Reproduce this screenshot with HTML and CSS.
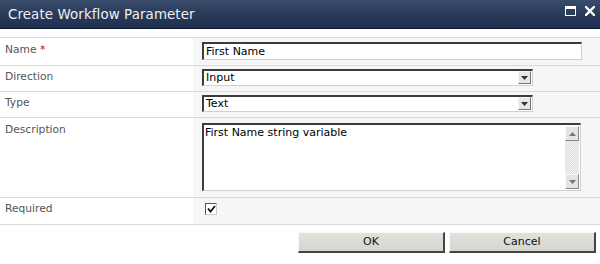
FILE: index.html
```html
<!DOCTYPE html>
<html>
<head>
<meta charset="utf-8">
<link rel="stylesheet" href="styles.css">
</head>
<body>
<div class="dialog">
  <div class="titlebar">
    <div class="title">Create Workflow Parameter</div>
    <div class="tools">
      <svg class="ico" width="11" height="10" viewBox="0 0 11 10"><rect x="0.5" y="0.5" width="10" height="9" fill="none" stroke="#fff" stroke-width="1"/><rect x="0" y="0" width="11" height="3" fill="#fff"/></svg>
      <svg class="ico" width="10" height="10" viewBox="0 0 10 10"><path d="M1 1 L9 9 M9 1 L1 9" stroke="#fff" stroke-width="2.4" stroke-linecap="square"/></svg>
    </div>
  </div>
  <div class="spacer"></div>
  <div class="form">
    <div class="row r-name">
      <div class="label">Name <span class="req">*</span></div>
      <div class="field"><div class="textbox wide">First Name</div></div>
    </div>
    <div class="row r-dir">
      <div class="label">Direction</div>
      <div class="field">
        <div class="select"><span class="sel-text">Input</span><span class="sel-btn"><svg width="7" height="4" viewBox="0 0 7 4"><path d="M0 0 H7 L3.5 4 Z" fill="#333"/></svg></span></div>
      </div>
    </div>
    <div class="row r-type">
      <div class="label">Type</div>
      <div class="field">
        <div class="select"><span class="sel-text">Text</span><span class="sel-btn"><svg width="7" height="4" viewBox="0 0 7 4"><path d="M0 0 H7 L3.5 4 Z" fill="#333"/></svg></span></div>
      </div>
    </div>
    <div class="row r-desc">
      <div class="label">Description</div>
      <div class="field">
        <div class="textarea">
          <div class="ta-text">First Name string variable</div>
          <div class="scroll">
            <span class="sb-btn"><svg width="7" height="4" viewBox="0 0 7 4"><path d="M0 4 H7 L3.5 0 Z" fill="#777"/></svg></span>
            <span class="sb-track"></span>
            <span class="sb-btn"><svg width="7" height="4" viewBox="0 0 7 4"><path d="M0 0 H7 L3.5 4 Z" fill="#777"/></svg></span>
          </div>
        </div>
      </div>
    </div>
    <div class="row r-req">
      <div class="label">Required</div>
      <div class="field">
        <div class="checkbox"><svg width="9" height="8" viewBox="0 0 9 8"><path d="M1 3.5 L3.5 6.5 L8 1" fill="none" stroke="#111" stroke-width="1.8"/></svg></div>
      </div>
    </div>
  </div>
  <div class="buttons">
    <div class="btn ok">OK</div>
    <div class="btn cancel">Cancel</div>
  </div>
</div>
</body>
</html>
```
FILE: styles.css
```css
html, body {
  margin: 0;
  padding: 0;
  background: #ffffff;
}
body {
  font-family: "DejaVu Sans", Verdana, sans-serif;
  font-size: 11px;
  width: 600px;
  height: 264px;
  overflow: hidden;
}
.titlebar {
  height: 28px;
  background: linear-gradient(#3a4c6b, #2a3b5a 50%, #1f3050);
  border-bottom: 1px solid #0d1a36;
  display: flex;
  align-items: center;
  justify-content: space-between;
  padding: 0 5px 0 8px;
}
.title {
  color: #eef1f5;
  font-family: "DejaVu Sans", sans-serif;
  font-size: 13.4px;
  letter-spacing: 0.1px;
  padding-top: 1px;
}
.tools {
  display: flex;
  gap: 9px;
  align-items: center;
  margin-top: -6px;
}
.ico { display: block; }
.spacer { height: 8px; }
.row {
  display: grid;
  grid-template-columns: 193px 1fr;
  border-top: 1px solid #d9d9d9;
}
.label {
  color: #555555;
  font-size: 10.7px;
  padding: 5px 0 0 5px;
  line-height: 13px;
}
.req { color: #cc0000; }
.field {
  background: #f6f6f6;
  padding-left: 9px;
}
.r-name { height: 27px; }
.r-name .field { padding-top: 4px; }
.r-dir, .r-type { height: 25px; }
.r-dir .label, .r-type .label { padding-top: 4px; }
.r-dir .field, .r-type .field { padding-top: 3px; }
.r-desc { height: 79px; }
.r-desc .field { padding-top: 5px; }
.r-req { height: 26px; border-bottom: 1px solid #d9d9d9; }
.r-req .label { padding-top: 4px; }
.r-req .field { padding-top: 5px; padding-left: 12px; }

.textbox, .select, .textarea, .checkbox {
  box-sizing: border-box;
  background: #fff;
  border-top: 2px solid #3c3c3c;
  border-left: 2px solid #3c3c3c;
  border-right: 1px solid #d4d0c8;
  border-bottom: 1px solid #d4d0c8;
  color: #000;
}
.textbox {
  width: 380px;
  height: 18px;
  line-height: 15px;
  padding-left: 2px;
}
.select {
  width: 331px;
  height: 17px;
  display: flex;
  justify-content: space-between;
  align-items: stretch;
}
.sel-text {
  line-height: 14px;
  padding-left: 2px;
}
.sel-btn {
  width: 13px;
  background: #e6e6e6;
  border-left: 1px solid #f4f4f4;
  border-top: 1px solid #f4f4f4;
  border-right: 1px solid #777;
  border-bottom: 1px solid #777;
  box-sizing: border-box;
  display: flex;
  align-items: center;
  justify-content: center;
  margin: 0 1px 1px 0;
}
.textarea {
  width: 379px;
  height: 68px;
  display: flex;
  justify-content: space-between;
}
.ta-text {
  padding: 1px 0 0 1px;
  line-height: 13px;
}
.scroll {
  width: 14px;
  display: flex;
  flex-direction: column;
  margin: 1px 1px 1px 0;
}
.sb-btn {
  height: 15px;
  background: #e4e4e4;
  box-sizing: border-box;
  border-top: 1px solid #fafafa;
  border-left: 1px solid #fafafa;
  border-right: 1px solid #888;
  border-bottom: 1px solid #888;
  display: flex;
  align-items: center;
  justify-content: center;
}
.sb-track {
  flex: 1;
  background: repeating-conic-gradient(#dcdcdc 0 25%, #f4f4f4 0 50%) 0 0 / 2px 2px;
}
.checkbox {
  width: 12px;
  height: 12px;
  display: flex;
  align-items: center;
  justify-content: center;
  border-width: 1px;
  border-top-color: #555;
  border-left-color: #555;
  border-right-color: #ccc;
  border-bottom-color: #ccc;
}
.buttons {
  display: flex;
  justify-content: flex-end;
  gap: 4px;
  padding: 7px 4px 0 0;
}
.btn {
  box-sizing: border-box;
  width: 147px;
  height: 21px;
  background: linear-gradient(#e2e2dc, #d6d6d0);
  border-top: 1px solid #f8f8f8;
  border-left: 1px solid #f8f8f8;
  border-right: 2px solid #444;
  border-bottom: 2px solid #444;
  color: #111;
  text-align: center;
  line-height: 18px;
}
```
